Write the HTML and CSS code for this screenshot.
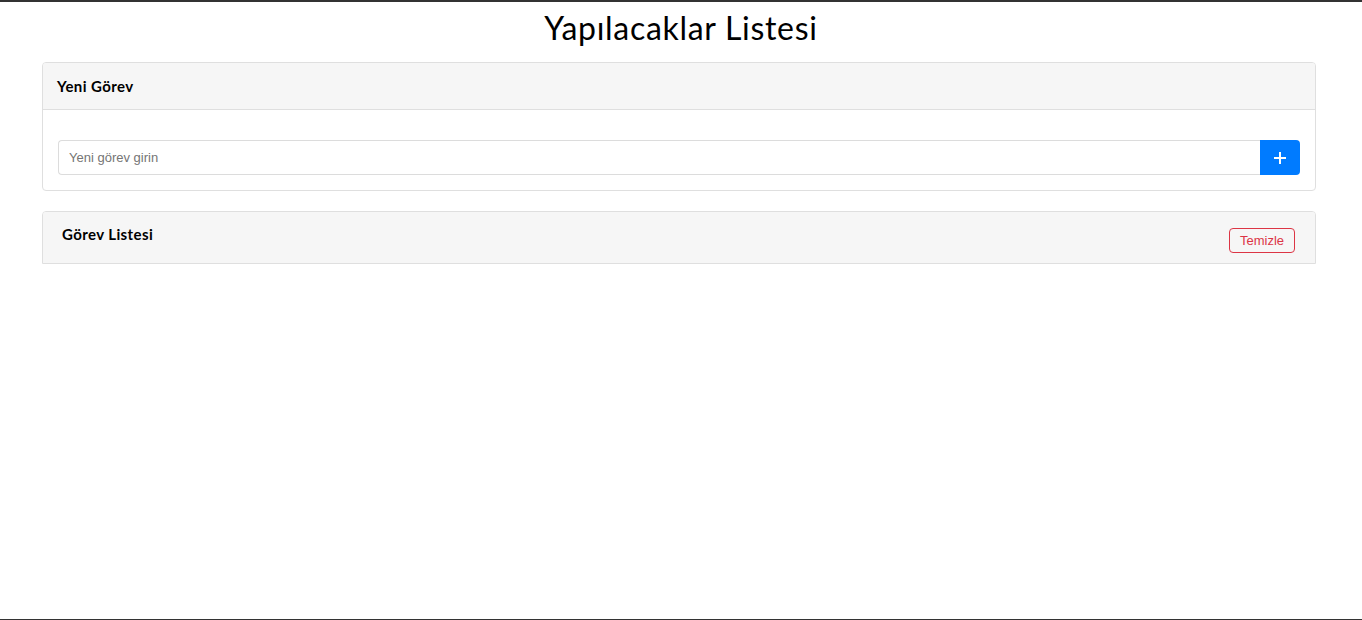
FILE: index.html
```html
<!DOCTYPE html>
<html lang="tr">
<head>
<meta charset="utf-8">
<title>Yapılacaklar Listesi</title>
<link rel="stylesheet" href="styles.css">
</head>
<body>
<div class="page">
  <h1 class="title">Yapılacaklar Listesi</h1>
  <div class="container">
    <section class="card">
      <div class="card-header">Yeni Görev</div>
      <div class="card-body">
        <form class="input-group">
          <input class="task-input" type="text" placeholder="Yeni görev girin">
          <button class="add-btn" type="button" aria-label="Ekle">
            <svg width="14" height="14" viewBox="0 0 14 14"><path d="M7 1v12M1 7h12" stroke="#fff" stroke-width="2" fill="none"/></svg>
          </button>
        </form>
      </div>
    </section>
    <section class="card list-card">
      <div class="card-header list-header">
        <h5 class="list-title">Görev Listesi</h5>
        <button class="clear-btn" type="button">Temizle</button>
      </div>
    </section>
  </div>
</div>
</body>
</html>
```
FILE: styles.css
```css
* { box-sizing: border-box; }
html, body { margin: 0; padding: 0; background: #fff; }
body { font-family: "Liberation Sans", Arial, sans-serif; color: #000; }
.page {
  min-height: 100vh;
  border-top: 2px solid #333;
  border-bottom: 1px solid #333;
}
.title {
  margin: 7px 0 15px;
  font-family: Lato, "Noto Sans", sans-serif;
  font-weight: 400;
  font-size: 32px;
  line-height: 38px;
  letter-spacing: 0.7px;
  text-align: center;
  color: #000;
}
.container { padding: 0 46px 0 42px; }
.card {
  border: 1px solid #dfdfdf;
  border-radius: 4px;
  background: #fff;
  overflow: hidden;
}
.card-header {
  background: #f6f6f6;
  border-bottom: 1px solid #dfdfdf;
  padding: 13px 14px;
  height: 47px;
  font-family: Lato, "Noto Sans", sans-serif;
  font-size: 15px;
  font-weight: 700;
  line-height: 20px;
  letter-spacing: 0.4px;
}
.card-body { padding: 30px 15px 15px 15px; }
.input-group { display: flex; margin: 0; }
.task-input {
  flex: 1;
  height: 35px;
  border: 1px solid #dcdcdc;
  border-right: none;
  border-radius: 4px 0 0 4px;
  padding: 0 10px;
  font-family: "Liberation Sans", Arial, sans-serif;
  font-size: 13px;
  color: #333;
  outline: none;
}
.task-input::placeholder { color: #757575; }
.add-btn {
  width: 40px;
  height: 35px;
  border: none;
  background: #007bff;
  border-radius: 0 4px 4px 0;
  display: flex;
  align-items: center;
  justify-content: center;
  padding: 0;
}
.list-card { margin-top: 20px; border-radius: 4px 4px 0 0; }
.list-header {
  display: flex;
  justify-content: space-between;
  align-items: flex-start;
  height: 51px;
  padding: 12px 20px 0 19px;
  border-bottom: none;
}
.list-title {
  margin: 0;
  font-size: 15px;
  font-weight: 700;
  line-height: 20px;
}
.clear-btn {
  margin-top: 4px;
  width: 66px;
  height: 25px;
  border: 1px solid #dc3545;
  border-radius: 4px;
  background: transparent;
  color: #dc3545;
  font-family: "Liberation Sans", Arial, sans-serif;
  font-size: 13px;
  padding: 0;
}
```
